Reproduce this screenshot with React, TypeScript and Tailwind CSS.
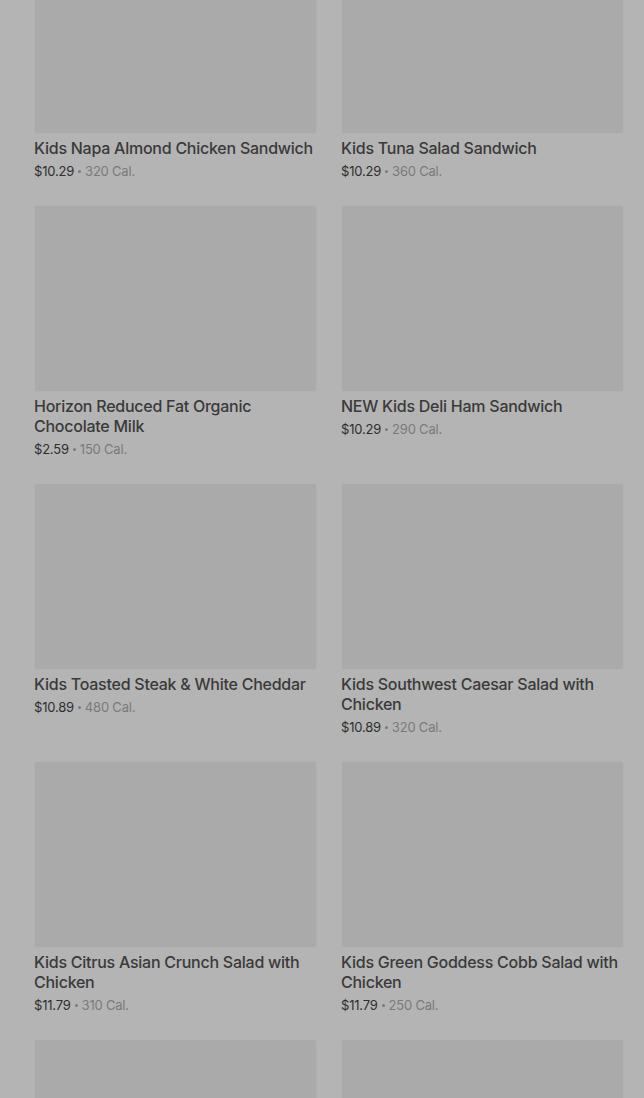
import React from "react";

type Item = { name: string; price: string; cal: string };

const items: Item[] = [
  { name: "Kids Napa Almond Chicken Sandwich", price: "$10.29", cal: "320 Cal." },
  { name: "Kids Tuna Salad Sandwich", price: "$10.29", cal: "360 Cal." },
  { name: "Horizon Reduced Fat Organic Chocolate Milk", price: "$2.59", cal: "150 Cal." },
  { name: "NEW Kids Deli Ham Sandwich", price: "$10.29", cal: "290 Cal." },
  { name: "Kids Toasted Steak & White Cheddar", price: "$10.89", cal: "480 Cal." },
  { name: "Kids Southwest Caesar Salad with Chicken", price: "$10.89", cal: "320 Cal." },
  { name: "Kids Citrus Asian Crunch Salad with Chicken", price: "$11.79", cal: "310 Cal." },
  { name: "Kids Green Goddess Cobb Salad with Chicken", price: "$11.79", cal: "250 Cal." },
  { name: "", price: "", cal: "" },
  { name: "", price: "", cal: "" },
];

function Card({ item }: { item: Item }) {
  return (
    <div className="flex flex-col">
      <div className="h-[187px] w-full rounded-[3px] border border-[#b2b2b2] bg-[#aaaaaa]" />
      {item.name && (
        <>
          <div className="mt-[4px] text-[16px] leading-[20px] font-medium text-[#3a3a3a] tracking-[-0.25px]">
            {item.name}
          </div>
          <div className="mt-[4px] flex items-center text-[13px] leading-[18px] text-[#7a7a7a] tracking-[-0.2px]">
            <span className="text-[#2e2e2e]">{item.price}</span>
            <span className="mx-[4px] h-[3px] w-[3px] rounded-full bg-[#7a7a7a]" />
            <span>{item.cal}</span>
          </div>
        </>
      )}
    </div>
  );
}

export default function App() {
  return (
    <div
      className="w-[644px] h-[1098px] overflow-hidden bg-[#b4b4b4]"
      style={{ fontFamily: "Inter, 'Noto Sans', sans-serif" }}
    >
      <div className="mt-[-53px] pl-[34px] pr-[20px] grid grid-cols-2 gap-x-[24px] gap-y-[25px]">
        {items.map((it, i) => (
          <Card key={i} item={it} />
        ))}
      </div>
    </div>
  );
}
